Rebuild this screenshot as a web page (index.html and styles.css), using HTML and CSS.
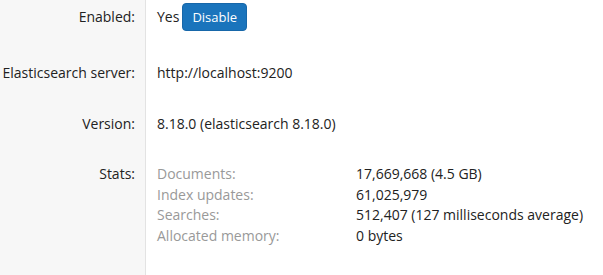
FILE: index.html
```html
<!DOCTYPE html>
<html>
<head>
<meta charset="utf-8">
<link rel="stylesheet" href="styles.css">
</head>
<body>
<div class="info">
  <div class="label row-first">Enabled:</div>
  <div class="value row-first"><span class="yes">Yes</span><button class="btn">Disable</button></div>

  <div class="label">Elasticsearch server:</div>
  <div class="value">http://localhost:9200</div>

  <div class="label">Version:</div>
  <div class="value">8.18.0 (elasticsearch 8.18.0)</div>

  <div class="label last">Stats:</div>
  <div class="value last">
    <div class="stats">
      <div class="stat-name">Documents:</div><div class="stat-val">17,669,668 (4.5 GB)</div>
      <div class="stat-name">Index updates:</div><div class="stat-val">61,025,979</div>
      <div class="stat-name">Searches:</div><div class="stat-val">512,407 (127 milliseconds average)</div>
      <div class="stat-name">Allocated memory:</div><div class="stat-val">0 bytes</div>
    </div>
  </div>
</div>
</body>
</html>
```
FILE: styles.css
```css
html, body {
  margin: 0;
  padding: 0;
  height: 100%;
}
body {
  font-family: "Open Sans", "Liberation Sans", Arial, sans-serif;
  font-size: 14px;
  color: #222;
  background: #fff;
}
.info {
  display: grid;
  grid-template-columns: 146px 1fr;
  grid-template-rows: auto auto auto 1fr;
  min-height: 100vh;
}
.label {
  background: #f7f7f7;
  border-right: 1px solid #e3e3e3;
  text-align: right;
  padding: 16px 10px 15px 0;
  line-height: 20px;
  white-space: nowrap;
}
.value {
  padding: 16px 0 15px 11px;
  line-height: 20px;
}
.row-first.label {
  padding-top: 7px;
  padding-bottom: 20px;
}
.row-first.value {
  padding-top: 3px;
  padding-bottom: 16px;
  display: flex;
  align-items: center;
}
.yes {
  margin-right: 3px;
}
.btn {
  font-family: inherit;
  font-size: 13px;
  color: #fff;
  background: #1a74bc;
  border: 1px solid #1767a9;
  border-radius: 4px;
  height: 28px;
  padding: 0 9px;
  cursor: pointer;
}
.label.last, .value.last {
  padding-top: 15px;
}
.stats {
  display: grid;
  grid-template-columns: 199px auto;
  line-height: 20.5px;
}
.stat-name {
  color: #999;
}
```
